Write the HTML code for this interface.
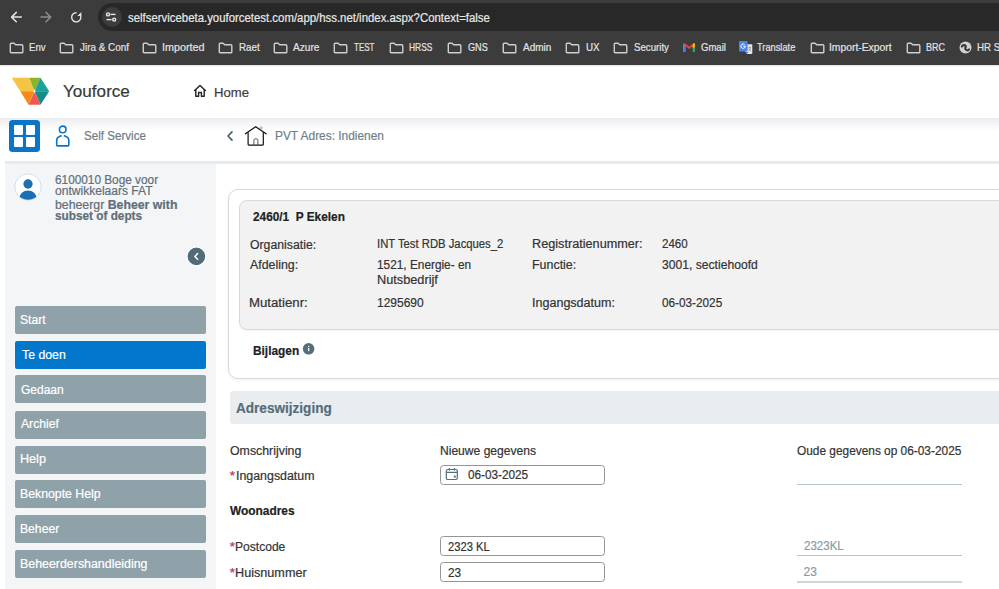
<!DOCTYPE html>
<html><head><meta charset="utf-8"><style>
html,body{margin:0;padding:0;width:999px;height:589px;overflow:hidden;background:#fff;position:relative;font-family:"Liberation Sans",sans-serif}
.t{position:absolute;white-space:nowrap;line-height:1;transform-origin:0 0;-webkit-text-stroke:0.2px currentColor}
.t b{font-weight:700}
.ic{position:absolute}
.abs{position:absolute}
</style></head><body>
<!-- browser chrome -->
<div class="abs" style="left:0;top:0;width:999px;height:65px;background:#3c3c3c"></div>
<div class="abs" style="left:98px;top:3px;width:1000px;height:28px;border-radius:14px;background:#282828"></div>
<div class="abs" style="left:101.5px;top:7px;width:20px;height:20px;border-radius:10px;background:#3c3c3c"></div>
<svg class="ic" style="left:0;top:0" width="130" height="34" viewBox="0 0 130 34">
 <g fill="none" stroke="#e3e3e3" stroke-width="1.5" stroke-linecap="round" stroke-linejoin="round">
  <path d="M21.3 17.1 H11.8 M16.3 12.4 L11.6 17.1 L16.3 21.8"/>
 </g>
 <g fill="none" stroke="#8a8a8a" stroke-width="1.5" stroke-linecap="round" stroke-linejoin="round">
  <path d="M41 17.1 H50.5 M46 12.4 L50.7 17.1 L46 21.8"/>
 </g>
 <path d="M80.4 15.3 A4.6 4.6 0 1 1 76.6 12.7" fill="none" stroke="#e3e3e3" stroke-width="1.4"/>
 <path d="M77.4 16 H81.4 V12 Z" fill="#e3e3e3"/>
 <g fill="none" stroke="#e8e8e8" stroke-width="1.4">
  <circle cx="108" cy="14.4" r="1.5"/><path d="M110.5 14.4 H115.5"/>
  <circle cx="114.2" cy="19.6" r="1.5"/><path d="M106.5 19.6 H111.5"/>
 </g>
</svg>
<svg class="ic" style="left:9.3px;top:42px" width="15" height="12" viewBox="0 0 15 12"><path d="M1.3 2.1 Q1.3 1.2 2.2 1.2 H5.1 L6.7 2.7 H12.8 Q13.8 2.7 13.8 3.7 V9.9 Q13.8 10.8 12.9 10.8 H2.2 Q1.3 10.8 1.3 9.9 Z" fill="none" stroke="#cfcfcf" stroke-width="1.4" stroke-linejoin="round"/></svg><svg class="ic" style="left:59.3px;top:42px" width="15" height="12" viewBox="0 0 15 12"><path d="M1.3 2.1 Q1.3 1.2 2.2 1.2 H5.1 L6.7 2.7 H12.8 Q13.8 2.7 13.8 3.7 V9.9 Q13.8 10.8 12.9 10.8 H2.2 Q1.3 10.8 1.3 9.9 Z" fill="none" stroke="#cfcfcf" stroke-width="1.4" stroke-linejoin="round"/></svg><svg class="ic" style="left:142.3px;top:42px" width="15" height="12" viewBox="0 0 15 12"><path d="M1.3 2.1 Q1.3 1.2 2.2 1.2 H5.1 L6.7 2.7 H12.8 Q13.8 2.7 13.8 3.7 V9.9 Q13.8 10.8 12.9 10.8 H2.2 Q1.3 10.8 1.3 9.9 Z" fill="none" stroke="#cfcfcf" stroke-width="1.4" stroke-linejoin="round"/></svg><svg class="ic" style="left:218.3px;top:42px" width="15" height="12" viewBox="0 0 15 12"><path d="M1.3 2.1 Q1.3 1.2 2.2 1.2 H5.1 L6.7 2.7 H12.8 Q13.8 2.7 13.8 3.7 V9.9 Q13.8 10.8 12.9 10.8 H2.2 Q1.3 10.8 1.3 9.9 Z" fill="none" stroke="#cfcfcf" stroke-width="1.4" stroke-linejoin="round"/></svg><svg class="ic" style="left:273.3px;top:42px" width="15" height="12" viewBox="0 0 15 12"><path d="M1.3 2.1 Q1.3 1.2 2.2 1.2 H5.1 L6.7 2.7 H12.8 Q13.8 2.7 13.8 3.7 V9.9 Q13.8 10.8 12.9 10.8 H2.2 Q1.3 10.8 1.3 9.9 Z" fill="none" stroke="#cfcfcf" stroke-width="1.4" stroke-linejoin="round"/></svg><svg class="ic" style="left:333.3px;top:42px" width="15" height="12" viewBox="0 0 15 12"><path d="M1.3 2.1 Q1.3 1.2 2.2 1.2 H5.1 L6.7 2.7 H12.8 Q13.8 2.7 13.8 3.7 V9.9 Q13.8 10.8 12.9 10.8 H2.2 Q1.3 10.8 1.3 9.9 Z" fill="none" stroke="#cfcfcf" stroke-width="1.4" stroke-linejoin="round"/></svg><svg class="ic" style="left:389.3px;top:42px" width="15" height="12" viewBox="0 0 15 12"><path d="M1.3 2.1 Q1.3 1.2 2.2 1.2 H5.1 L6.7 2.7 H12.8 Q13.8 2.7 13.8 3.7 V9.9 Q13.8 10.8 12.9 10.8 H2.2 Q1.3 10.8 1.3 9.9 Z" fill="none" stroke="#cfcfcf" stroke-width="1.4" stroke-linejoin="round"/></svg><svg class="ic" style="left:447.3px;top:42px" width="15" height="12" viewBox="0 0 15 12"><path d="M1.3 2.1 Q1.3 1.2 2.2 1.2 H5.1 L6.7 2.7 H12.8 Q13.8 2.7 13.8 3.7 V9.9 Q13.8 10.8 12.9 10.8 H2.2 Q1.3 10.8 1.3 9.9 Z" fill="none" stroke="#cfcfcf" stroke-width="1.4" stroke-linejoin="round"/></svg><svg class="ic" style="left:501.8px;top:42px" width="15" height="12" viewBox="0 0 15 12"><path d="M1.3 2.1 Q1.3 1.2 2.2 1.2 H5.1 L6.7 2.7 H12.8 Q13.8 2.7 13.8 3.7 V9.9 Q13.8 10.8 12.9 10.8 H2.2 Q1.3 10.8 1.3 9.9 Z" fill="none" stroke="#cfcfcf" stroke-width="1.4" stroke-linejoin="round"/></svg><svg class="ic" style="left:565.3px;top:42px" width="15" height="12" viewBox="0 0 15 12"><path d="M1.3 2.1 Q1.3 1.2 2.2 1.2 H5.1 L6.7 2.7 H12.8 Q13.8 2.7 13.8 3.7 V9.9 Q13.8 10.8 12.9 10.8 H2.2 Q1.3 10.8 1.3 9.9 Z" fill="none" stroke="#cfcfcf" stroke-width="1.4" stroke-linejoin="round"/></svg><svg class="ic" style="left:613.3px;top:42px" width="15" height="12" viewBox="0 0 15 12"><path d="M1.3 2.1 Q1.3 1.2 2.2 1.2 H5.1 L6.7 2.7 H12.8 Q13.8 2.7 13.8 3.7 V9.9 Q13.8 10.8 12.9 10.8 H2.2 Q1.3 10.8 1.3 9.9 Z" fill="none" stroke="#cfcfcf" stroke-width="1.4" stroke-linejoin="round"/></svg><svg class="ic" style="left:809.8px;top:42px" width="15" height="12" viewBox="0 0 15 12"><path d="M1.3 2.1 Q1.3 1.2 2.2 1.2 H5.1 L6.7 2.7 H12.8 Q13.8 2.7 13.8 3.7 V9.9 Q13.8 10.8 12.9 10.8 H2.2 Q1.3 10.8 1.3 9.9 Z" fill="none" stroke="#cfcfcf" stroke-width="1.4" stroke-linejoin="round"/></svg><svg class="ic" style="left:906.3px;top:42px" width="15" height="12" viewBox="0 0 15 12"><path d="M1.3 2.1 Q1.3 1.2 2.2 1.2 H5.1 L6.7 2.7 H12.8 Q13.8 2.7 13.8 3.7 V9.9 Q13.8 10.8 12.9 10.8 H2.2 Q1.3 10.8 1.3 9.9 Z" fill="none" stroke="#cfcfcf" stroke-width="1.4" stroke-linejoin="round"/></svg>
<svg class="ic" style="left:682.7px;top:43px" width="12.4" height="9.2" viewBox="0 0 12.4 9.2">
 <path d="M0 1.6 Q0 0.6 0.9 0.4 L2.7 1.8 V9.1 H0.9 Q0 9.1 0 8.2 Z" fill="#4285f4"/>
 <path d="M12.4 1.6 Q12.4 0.6 11.5 0.4 L9.7 1.8 V9.1 H11.5 Q12.4 9.1 12.4 8.2 Z" fill="#34a853"/>
 <path d="M0.2 1.2 Q0.8 -0.2 2.2 0.4 L6.2 3.5 L10.2 0.4 Q11.6 -0.2 12.2 1.2 L6.2 5.9 Z" fill="#ea4335"/>
 <path d="M9.7 1.8 L10.2 0.4 Q11.6 -0.2 12.2 1.2 L12.4 2 V3.5 L9.7 5.5 Z" fill="#fbbc04"/>
</svg>
<svg class="ic" style="left:739px;top:41.4px" width="14" height="13.2" viewBox="0 0 14 13.2">
 <path d="M6.3 3.2 H12.6 Q13.3 3.2 13.3 3.9 V12.3 Q13.3 13 12.6 13 H7.8 L6.3 10.2 Z" fill="#e6e6e6"/>
 <path d="M7 11 L7.8 13 L9.3 11 Z" fill="#3a63c8"/>
 <rect x="0" y="0" width="8.6" height="10.6" rx="1" fill="#4a86e8"/>
 <path d="M6.3 5.2 A2.2 2.2 0 1 1 5.6 3.6 M4.3 5.2 H6.3" fill="none" stroke="#fff" stroke-width="1"/>
 <path d="M9.4 6.5 H12 M10.7 5.7 V6.5 M9.8 7.3 Q10.7 9.5 12 10 M11.6 7.3 Q10.7 9.5 9.4 10" fill="none" stroke="#8a8a8a" stroke-width="0.7"/>
</svg>
<svg class="ic" style="left:958.5px;top:41.3px" width="13" height="13" viewBox="0 0 13 13">
 <circle cx="6.5" cy="6.5" r="6" fill="#d2d2d2"/>
 <path d="M2.9 5.4 Q3.9 3.4 5.9 4.3 Q7.3 5.1 6.4 6.7 Q5.8 8.6 8 9.2 Q9.4 9.5 10 8.5" fill="none" stroke="#3a3a3a" stroke-width="2.2" stroke-linecap="round"/>
</svg>
<div class="t" style="left:976.6px;top:42.2px;font-size:10.5px;color:#e3e3e3;transform:scaleX(0.92)">HR Se</div>

<!-- app header -->
<div class="abs" style="left:0;top:65px;width:999px;height:2px;background:linear-gradient(#dfe1e3,#fff)"></div>
<svg class="ic" style="left:11px;top:77px" width="40" height="29" viewBox="11 77 40 29">
 <polygon points="11.7,77.8 29.3,77.8 34.5,91.3 20.3,91.3" fill="#f4c444"/>
 <polygon points="29.3,77.8 40.5,77.8 34.5,91.3" fill="#8cb42a"/>
 <polygon points="40.5,77.8 49.2,91.3 34.5,91.3" fill="#1ba39a"/>
 <polygon points="34.5,91.3 49.2,91.3 40.5,104.8" fill="#178a8c"/>
 <polygon points="34.5,91.3 40.5,104.8 28.5,104.8" fill="#ee5a52"/>
 <polygon points="20.3,91.3 34.5,91.3 28.5,104.8" fill="#f7891c"/>
 <polygon points="34.5,89.3 35.6,91.3 34.5,93.3 33.4,91.3" fill="#fff"/>
</svg>
<svg class="ic" style="left:192px;top:83px" width="16" height="16" viewBox="0 0 16 16">
 <path d="M2.6 7.6 L8 2.6 L13.4 7.6 M3.8 6.6 V13.3 H6.6 V9.5 H9.4 V13.3 H12.2 V6.6" fill="none" stroke="#222" stroke-width="1.4" stroke-linejoin="round" stroke-linecap="round"/>
</svg>
<div class="abs" style="left:0;top:117.5px;width:999px;height:12.5px;background:linear-gradient(#eaecef,#f3f4f6 40%,#fff)"></div>
<!-- row 2 -->
<div class="abs" style="left:9.2px;top:120.4px;width:31.1px;height:31.2px;border-radius:3.5px;background:#0a74c8"></div>
<div class="abs" style="left:14.2px;top:125.3px;width:9.1px;height:9.4px;border-radius:1px;background:#fff"></div>
<div class="abs" style="left:26px;top:125.3px;width:9.2px;height:9.4px;border-radius:1px;background:#fff"></div>
<div class="abs" style="left:14.2px;top:137.4px;width:9.1px;height:9.6px;border-radius:1px;background:#fff"></div>
<div class="abs" style="left:26px;top:137.4px;width:9.2px;height:9.6px;border-radius:1px;background:#fff"></div>
<svg class="ic" style="left:54px;top:124px" width="18" height="25" viewBox="0 0 18 25">
 <circle cx="8.7" cy="5.4" r="3.3" fill="none" stroke="#0a74c8" stroke-width="1.6"/>
 <path d="M7.1 11.8 L4.6 13 Q2.7 13.9 2.7 16 V21.1 Q2.7 21.9 3.5 21.9 H14 Q14.8 21.9 14.8 21.1 V16 Q14.8 13.9 12.9 13 L10.4 11.8" fill="none" stroke="#0a74c8" stroke-width="1.6" stroke-linecap="round" stroke-linejoin="round"/>
</svg>
<svg class="ic" style="left:222px;top:126px" width="50" height="22" viewBox="222 126 50 22">
 <path d="M232 131.9 L228 136 L232 140.1" fill="none" stroke="#455a64" stroke-width="1.6" stroke-linecap="round" stroke-linejoin="round"/>
 <path d="M245.4 133.8 L255.7 126.7 L266.1 133.8" fill="none" stroke="#111" stroke-width="1.25" stroke-linecap="round" stroke-linejoin="round"/>
 <path d="M248.1 132.2 V144.2 Q248.1 145.2 249.1 145.2 H262.3 Q263.3 145.2 263.3 144.2 V132.2" fill="none" stroke="#111" stroke-width="1.2"/>
 <path d="M253.9 145.2 V140.3 Q253.9 138.7 255.9 138.7 Q257.9 138.7 257.9 140.3 V145.2" fill="none" stroke="#555" stroke-width="1"/>
 <circle cx="261.2" cy="127.9" r="1.1" fill="none" stroke="#999" stroke-width="0.8"/>
</svg>
<div class="abs" style="left:5px;top:161px;width:994px;height:3.2px;background:#e8ebee"></div>
<!-- sidebar -->
<div class="abs" style="left:5px;top:164px;width:211px;height:425px;background:#f4f5f7"></div>
<svg class="ic" style="left:14px;top:173px" width="28" height="28" viewBox="0 0 28 28">
 <defs><clipPath id="av"><circle cx="14" cy="14" r="12.8"/></clipPath></defs>
 <circle cx="14" cy="14" r="13.2" fill="#fff" stroke="#c2d8ea" stroke-width="0.8"/>
 <g clip-path="url(#av)" fill="#1d6fb5">
  <circle cx="14" cy="11" r="4.65"/>
  <ellipse cx="14" cy="25" rx="8.6" ry="7.4"/>
 </g>
</svg>
<svg class="ic" style="left:186px;top:246px" width="21" height="21" viewBox="0 0 21 21">
 <circle cx="10.4" cy="10.4" r="9.5" fill="#516b79" stroke="#fff" stroke-width="1.4"/>
 <path d="M11.6 7.6 L8.9 10.4 L11.6 13.2" fill="none" stroke="#fff" stroke-width="1.5" stroke-linecap="round" stroke-linejoin="round"/>
</svg>
<div class="abs" style="left:15px;top:306.1px;width:191px;height:28px;border-radius:2px;background:#8fa1a9"></div>
<div class="abs" style="left:15px;top:340.9px;width:191px;height:28px;border-radius:2px;background:#0277cc"></div>
<div class="abs" style="left:15px;top:375.1px;width:191px;height:28px;border-radius:2px;background:#8fa1a9"></div>
<div class="abs" style="left:15px;top:410.7px;width:191px;height:28px;border-radius:2px;background:#8fa1a9"></div>
<div class="abs" style="left:15px;top:445.6px;width:191px;height:28px;border-radius:2px;background:#8fa1a9"></div>
<div class="abs" style="left:15px;top:480.3px;width:191px;height:28px;border-radius:2px;background:#8fa1a9"></div>
<div class="abs" style="left:15px;top:515px;width:191px;height:28px;border-radius:2px;background:#8fa1a9"></div>
<div class="abs" style="left:15px;top:549.6px;width:191px;height:28px;border-radius:2px;background:#8fa1a9"></div>

<!-- content -->
<div class="abs" style="left:228px;top:189px;width:900px;height:188px;border:1px solid #d9d9d9;border-radius:10px;background:#fff;box-shadow:0 1px 3px rgba(0,0,0,0.07)"></div>
<div class="abs" style="left:239px;top:200px;width:900px;height:128px;border:1px solid #d9d9d9;border-radius:8px;background:#f2f2f2;box-shadow:0 1px 2px rgba(0,0,0,0.05)"></div>
<svg class="ic" style="left:302px;top:342px" width="14" height="14" viewBox="0 0 14 14">
 <circle cx="6.6" cy="6.8" r="5.8" fill="#546e7a"/>
 <rect x="6.0" y="6.0" width="1.25" height="3.2" fill="#fff"/><rect x="6.0" y="4.0" width="1.25" height="1.1" fill="#fff"/>
</svg>
<div class="abs" style="left:229.6px;top:391.2px;width:900px;height:32.7px;border-radius:3px;background:#eaedf0"></div>
<div class="abs" style="left:440px;top:465px;width:163px;height:18px;border:1px solid #959595;border-radius:3.5px;background:#fff"></div>
<svg class="ic" style="left:445px;top:467px" width="14" height="14" viewBox="0 0 14 14">
 <rect x="1.3" y="2.5" width="11" height="10" rx="1.4" fill="none" stroke="#546e7a" stroke-width="1.2"/>
 <path d="M1.3 5.3 H12.3 M4.3 1 V3.5 M9.3 1 V3.5" stroke="#546e7a" stroke-width="1.2"/>
 <rect x="8.8" y="8.6" width="2" height="2" fill="#546e7a"/>
</svg>
<div class="abs" style="left:440px;top:536px;width:163px;height:18px;border:1px solid #959595;border-radius:3.5px;background:#fff"></div>
<div class="abs" style="left:440px;top:562px;width:163px;height:18px;border:1px solid #959595;border-radius:3.5px;background:#fff"></div>
<div class="abs" style="left:797px;top:483.5px;width:165px;height:1.2px;background:#b7c4cc"></div>
<div class="abs" style="left:797px;top:555px;width:165px;height:1.2px;background:#b7c4cc"></div>
<div class="abs" style="left:797px;top:581px;width:165px;height:2px;background:#cbd5da"></div>
<div class="t" style="left:229.8px;top:468.8px;font-size:13.5px;color:#b03a5b">*</div>
<div class="t" style="left:229.8px;top:539.8px;font-size:13.5px;color:#b03a5b">*</div>
<div class="t" style="left:229.8px;top:565.8px;font-size:13.5px;color:#b03a5b">*</div>
<div class="t" style="left:128.0px;top:11.6px;font-size:12.5px;font-weight:400;color:#e8e8e8;transform:scaleX(0.9113)">selfservicebeta.youforcetest.com/app/hss.net/index.aspx?Context=false</div>
<div class="t" style="left:28.59px;top:42.0px;font-size:10.5px;font-weight:400;color:#e3e3e3;transform:scaleX(0.9118)">Env</div>
<div class="t" style="left:80.0px;top:42.0px;font-size:10.5px;font-weight:400;color:#e3e3e3;transform:scaleX(0.9423)">Jira &amp; Conf</div>
<div class="t" style="left:161.97px;top:42.0px;font-size:10.5px;font-weight:400;color:#e3e3e3;transform:scaleX(1.025)">Imported</div>
<div class="t" style="left:238.57px;top:42.0px;font-size:10.5px;font-weight:400;color:#e3e3e3;transform:scaleX(0.9286)">Raet</div>
<div class="t" style="left:293.0px;top:42.0px;font-size:10.5px;font-weight:400;color:#e3e3e3;transform:scaleX(0.963)">Azure</div>
<div class="t" style="left:354.0px;top:42.0px;font-size:10.5px;font-weight:400;color:#e3e3e3;transform:scaleX(0.763)">TEST</div>
<div class="t" style="left:409.2px;top:42.0px;font-size:10.5px;font-weight:400;color:#e3e3e3;transform:scaleX(0.8036)">HRSS</div>
<div class="t" style="left:468.0px;top:42.0px;font-size:10.5px;font-weight:400;color:#e3e3e3;transform:scaleX(0.8696)">GNS</div>
<div class="t" style="left:522.5px;top:42.0px;font-size:10.5px;font-weight:400;color:#e3e3e3;transform:scaleX(0.95)">Admin</div>
<div class="t" style="left:586.0px;top:42.0px;font-size:10.5px;font-weight:400;color:#e3e3e3;transform:scaleX(0.9286)">UX</div>
<div class="t" style="left:634.0px;top:42.0px;font-size:10.5px;font-weight:400;color:#e3e3e3;transform:scaleX(0.9211)">Security</div>
<div class="t" style="left:700.5px;top:42.0px;font-size:10.5px;font-weight:400;color:#e3e3e3;transform:scaleX(0.9074)">Gmail</div>
<div class="t" style="left:757.0px;top:42.0px;font-size:10.5px;font-weight:400;color:#e3e3e3;transform:scaleX(0.8837)">Translate</div>
<div class="t" style="left:829.02px;top:42.0px;font-size:10.5px;font-weight:400;color:#e3e3e3;transform:scaleX(0.9841)">Import-Export</div>
<div class="t" style="left:926.14px;top:42.0px;font-size:10.5px;font-weight:400;color:#e3e3e3;transform:scaleX(0.8571)">BRC</div>
<div class="t" style="left:63.0px;top:83.3px;font-size:17px;font-weight:400;color:#3a3a3a;transform:scaleX(1.0061)">Youforce</div>
<div class="t" style="left:213.69px;top:85.6px;font-size:13px;font-weight:400;color:#3c3c3c;transform:scaleX(1.0088)">Home</div>
<div class="t" style="left:83.66px;top:130.4px;font-size:12.3px;font-weight:400;color:#6e7c86;transform:scaleX(0.9438)">Self Service</div>
<div class="t" style="left:274.63px;top:130.1px;font-size:12.3px;font-weight:400;color:#6e7f8b;transform:scaleX(0.9676)">PVT Adres: Indienen</div>
<div class="t" style="left:54.6px;top:173.8px;font-size:12px;font-weight:400;color:#5f6f7b;transform:scaleX(0.9838)">6100010 Boge voor</div>
<div class="t" style="left:54.6px;top:185.2px;font-size:12px;font-weight:400;color:#5f6f7b;transform:scaleX(1.0041)">ontwikkelaars FAT</div>
<div class="t" style="left:54.6px;top:198.9px;font-size:12px;font-weight:400;color:#5f6f7b;transform:scaleX(1.0252)">beheergr <b>Beheer with</b></div>
<div class="t" style="left:54.6px;top:209.9px;font-size:12px;font-weight:400;color:#5f6f7b;transform:scaleX(0.982)"><b>subset of depts</b></div>
<div class="t" style="left:20.49px;top:314.2px;font-size:12px;font-weight:400;color:#ffffff;transform:scaleX(1.012)">Start</div>
<div class="t" style="left:21.5px;top:348.8px;font-size:12px;font-weight:400;color:#ffffff;transform:scaleX(1.0238)">Te doen</div>
<div class="t" style="left:21.4px;top:383.6px;font-size:12px;font-weight:400;color:#ffffff;transform:scaleX(0.9976)">Gedaan</div>
<div class="t" style="left:21.3px;top:418.4px;font-size:12px;font-weight:400;color:#ffffff;transform:scaleX(1.0132)">Archief</div>
<div class="t" style="left:20.25px;top:453.2px;font-size:12px;font-weight:400;color:#ffffff;transform:scaleX(1.05)">Help</div>
<div class="t" style="left:20.28px;top:488.0px;font-size:12px;font-weight:400;color:#ffffff;transform:scaleX(1.0244)">Beknopte Help</div>
<div class="t" style="left:20.29px;top:522.8px;font-size:12px;font-weight:400;color:#ffffff;transform:scaleX(1.0132)">Beheer</div>
<div class="t" style="left:20.27px;top:557.6px;font-size:12px;font-weight:400;color:#ffffff;transform:scaleX(1.0328)">Beheerdershandleiding</div>
<div class="t" style="left:252.6px;top:211.0px;font-size:12px;font-weight:700;color:#222222;transform:scaleX(0.986)">2460/1&nbsp; P Ekelen</div>
<div class="t" style="left:249.6px;top:238.5px;font-size:12px;font-weight:400;color:#333333;transform:scaleX(1.0219)">Organisatie:</div>
<div class="t" style="left:249.6px;top:259.3px;font-size:12px;font-weight:400;color:#333333;transform:scaleX(1.0304)">Afdeling:</div>
<div class="t" style="left:248.5px;top:297.0px;font-size:12px;font-weight:400;color:#333333;transform:scaleX(1.1)">Mutatienr:</div>
<div class="t" style="left:377.06px;top:238.4px;font-size:12px;font-weight:400;color:#333333;transform:scaleX(0.9406)">INT Test RDB Jacques_2</div>
<div class="t" style="left:377.01px;top:259.4px;font-size:12px;font-weight:400;color:#333333;transform:scaleX(0.9862)">1521, Energie- en</div>
<div class="t" style="left:376.94px;top:274.1px;font-size:12px;font-weight:400;color:#333333;transform:scaleX(1.0614)">Nutsbedrijf</div>
<div class="t" style="left:377.0px;top:296.7px;font-size:12px;font-weight:400;color:#333333;transform:scaleX(1.0)">1295690</div>
<div class="t" style="left:532.44px;top:238.4px;font-size:12px;font-weight:400;color:#333333;transform:scaleX(1.0563)">Registratienummer:</div>
<div class="t" style="left:532.46px;top:259.4px;font-size:12px;font-weight:400;color:#333333;transform:scaleX(1.0366)">Functie:</div>
<div class="t" style="left:532.46px;top:296.7px;font-size:12px;font-weight:400;color:#333333;transform:scaleX(1.0449)">Ingangsdatum:</div>
<div class="t" style="left:661.9px;top:238.4px;font-size:12px;font-weight:400;color:#333333;transform:scaleX(0.963)">2460</div>
<div class="t" style="left:661.9px;top:259.4px;font-size:12px;font-weight:400;color:#333333;transform:scaleX(1.0106)">3001, sectiehoofd</div>
<div class="t" style="left:661.9px;top:296.7px;font-size:12px;font-weight:400;color:#333333;transform:scaleX(0.9803)">06-03-2025</div>
<div class="t" style="left:252.7px;top:345.2px;font-size:12px;font-weight:700;color:#222222;transform:scaleX(0.9891)">Bijlagen</div>
<div class="t" style="left:236.1px;top:400.7px;font-size:14px;font-weight:700;color:#546e7a;transform:scaleX(0.9694)">Adreswijziging</div>
<div class="t" style="left:229.9px;top:444.7px;font-size:12px;font-weight:400;color:#333333;transform:scaleX(1.029)">Omschrijving</div>
<div class="t" style="left:439.99px;top:444.7px;font-size:12px;font-weight:400;color:#333333;transform:scaleX(1.0064)">Nieuwe gegevens</div>
<div class="t" style="left:797.0px;top:445.0px;font-size:12px;font-weight:400;color:#333333;transform:scaleX(0.9892)">Oude gegevens op 06-03-2025</div>
<div class="t" style="left:235.57px;top:469.8px;font-size:12px;font-weight:400;color:#333333;transform:scaleX(1.032)">Ingangsdatum</div>
<div class="t" style="left:467.7px;top:469.1px;font-size:12px;font-weight:400;color:#333333;transform:scaleX(0.9787)">06-03-2025</div>
<div class="t" style="left:229.6px;top:505.0px;font-size:12px;font-weight:700;color:#222222;transform:scaleX(0.9923)">Woonadres</div>
<div class="t" style="left:235.39px;top:541.0px;font-size:12px;font-weight:400;color:#333333;transform:scaleX(1.0061)">Postcode</div>
<div class="t" style="left:235.35px;top:567.1px;font-size:12px;font-weight:400;color:#333333;transform:scaleX(1.0537)">Huisnummer</div>
<div class="t" style="left:448.0px;top:540.7px;font-size:12px;font-weight:400;color:#333333;transform:scaleX(0.9333)">2323 KL</div>
<div class="t" style="left:448.0px;top:566.7px;font-size:12px;font-weight:400;color:#333333;transform:scaleX(0.9846)">23</div>
<div class="t" style="left:803.6px;top:540.0px;font-size:12px;font-weight:400;color:#8d9ba5;transform:scaleX(0.961)">2323KL</div>
<div class="t" style="left:803.6px;top:566.0px;font-size:12px;font-weight:400;color:#8d9ba5;transform:scaleX(1.0)">23</div>
</body></html>
